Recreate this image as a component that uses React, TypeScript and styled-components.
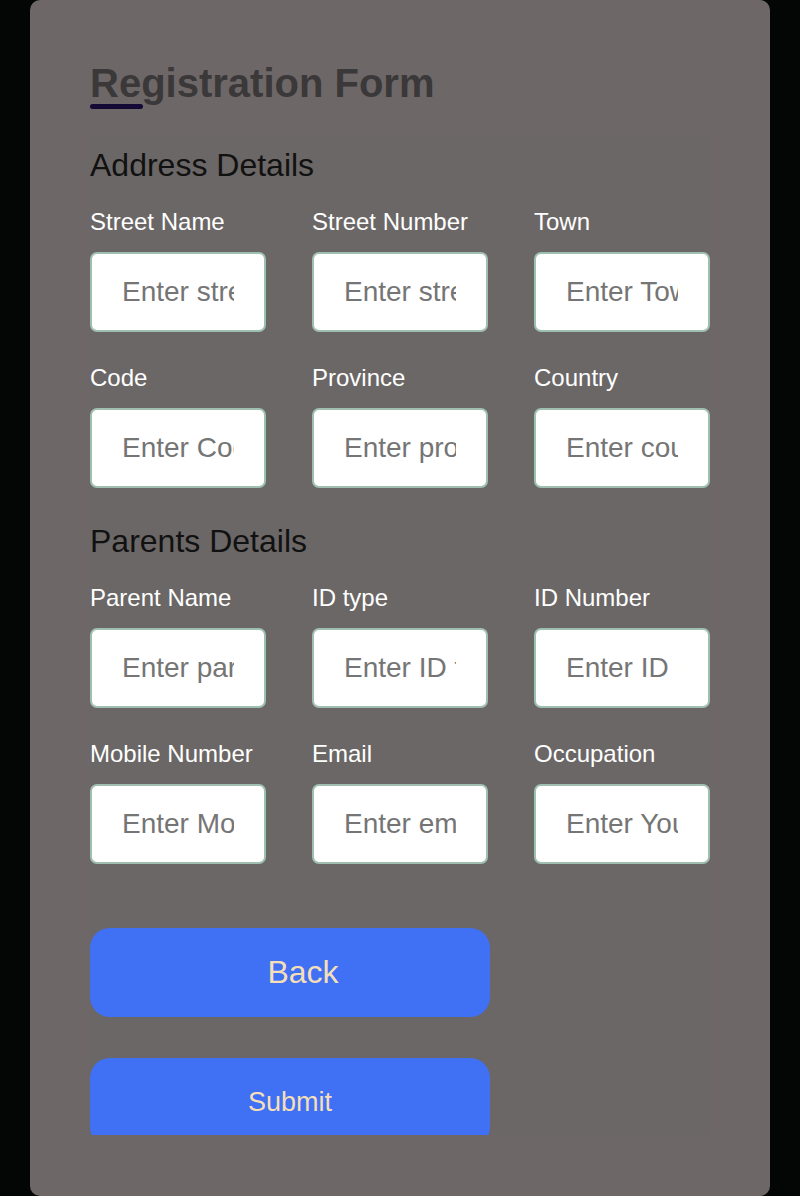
import React from "react";
import styled, { createGlobalStyle } from "styled-components";

const GlobalStyle = createGlobalStyle`
  html, body {
    margin: 0;
    padding: 0;
    background: #040606;
    font-family: "Liberation Sans", Arial, sans-serif;
  }
  * { box-sizing: border-box; }
`;

const Card = styled.div`
  width: 740px;
  height: 1196px;
  margin: 0 auto;
  padding: 60px;
  background: #6e6767;
  border-radius: 10px;
`;

const Title = styled.h1`
  position: relative;
  margin: 0 0 30px;
  font-size: 40px;
  line-height: 46px;
  font-weight: 700;
  color: #3a3838;
  &::before {
    content: "";
    position: absolute;
    left: 0;
    bottom: -3px;
    width: 53px;
    height: 5px;
    border-radius: 3px;
    background: #150a36;
  }
`;

const FormArea = styled.form`
  height: 999px;
  overflow: hidden;
  background: #6b6766;
  padding-top: 11px;
`;

const SectionHeading = styled.h2<{ $first?: boolean }>`
  margin: ${(p) => (p.$first ? "0" : "35px")} 0 24px;
  font-size: 32px;
  font-weight: 400;
  line-height: normal;
  color: #111;
`;

const FieldGrid = styled.div`
  display: grid;
  grid-template-columns: repeat(3, 176px);
  column-gap: 46px;
  row-gap: 32px;
`;

const Field = styled.div`
  display: flex;
  flex-direction: column;
`;

const Label = styled.label`
  font-size: 24px;
  line-height: normal;
  color: #fff;
  margin-bottom: 16px;
  white-space: nowrap;
`;

const Input = styled.input`
  width: 176px;
  height: 80px;
  padding: 0 30px;
  border: 2px solid #9fbfb1;
  border-radius: 7px;
  background: #fff;
  font-family: "Liberation Sans", Arial, sans-serif;
  font-size: 28px;
  color: #333;
  outline: none;
  &::placeholder {
    color: #757575;
  }
`;

const Button = styled.button<{ $size: number; $top: number; $shift?: number }>`
  display: block;
  width: 400px;
  height: 89px;
  margin-top: ${(p) => p.$top}px;
  padding: 0 0 0 ${(p) => p.$shift ?? 0}px;
  border: none;
  border-radius: 20px;
  background: #4070f4;
  color: #f5dfb8;
  font-family: "Liberation Sans", Arial, sans-serif;
  font-size: ${(p) => p.$size}px;
  cursor: pointer;
`;

type F = { label: string; placeholder: string };

const address: F[] = [
  { label: "Street Name", placeholder: "Enter street name" },
  { label: "Street Number", placeholder: "Enter street number" },
  { label: "Town", placeholder: "Enter Town" },
  { label: "Code", placeholder: "Enter Code" },
  { label: "Province", placeholder: "Enter province" },
  { label: "Country", placeholder: "Enter country" },
];

const parents: F[] = [
  { label: "Parent Name", placeholder: "Enter parent name" },
  { label: "ID type", placeholder: "Enter ID type" },
  { label: "ID Number", placeholder: "Enter ID number" },
  { label: "Mobile Number", placeholder: "Enter Mobile number" },
  { label: "Email", placeholder: "Enter email" },
  { label: "Occupation", placeholder: "Enter Your occupation" },
];

const Fields = ({ items }: { items: F[] }) => (
  <FieldGrid>
    {items.map((f) => (
      <Field key={f.label}>
        <Label>{f.label}</Label>
        <Input type="text" placeholder={f.placeholder} />
      </Field>
    ))}
  </FieldGrid>
);

export default function App() {
  return (
    <>
      <GlobalStyle />
      <Card>
        <Title>Registration Form</Title>
        <FormArea onSubmit={(e) => e.preventDefault()}>
          <SectionHeading $first>Address Details</SectionHeading>
          <Fields items={address} />
          <SectionHeading>Parents Details</SectionHeading>
          <Fields items={parents} />
          <Button type="button" $size={32} $top={64} $shift={26}>
            Back
          </Button>
          <Button type="submit" $size={27} $top={41}>
            Submit
          </Button>
        </FormArea>
      </Card>
    </>
  );
}
